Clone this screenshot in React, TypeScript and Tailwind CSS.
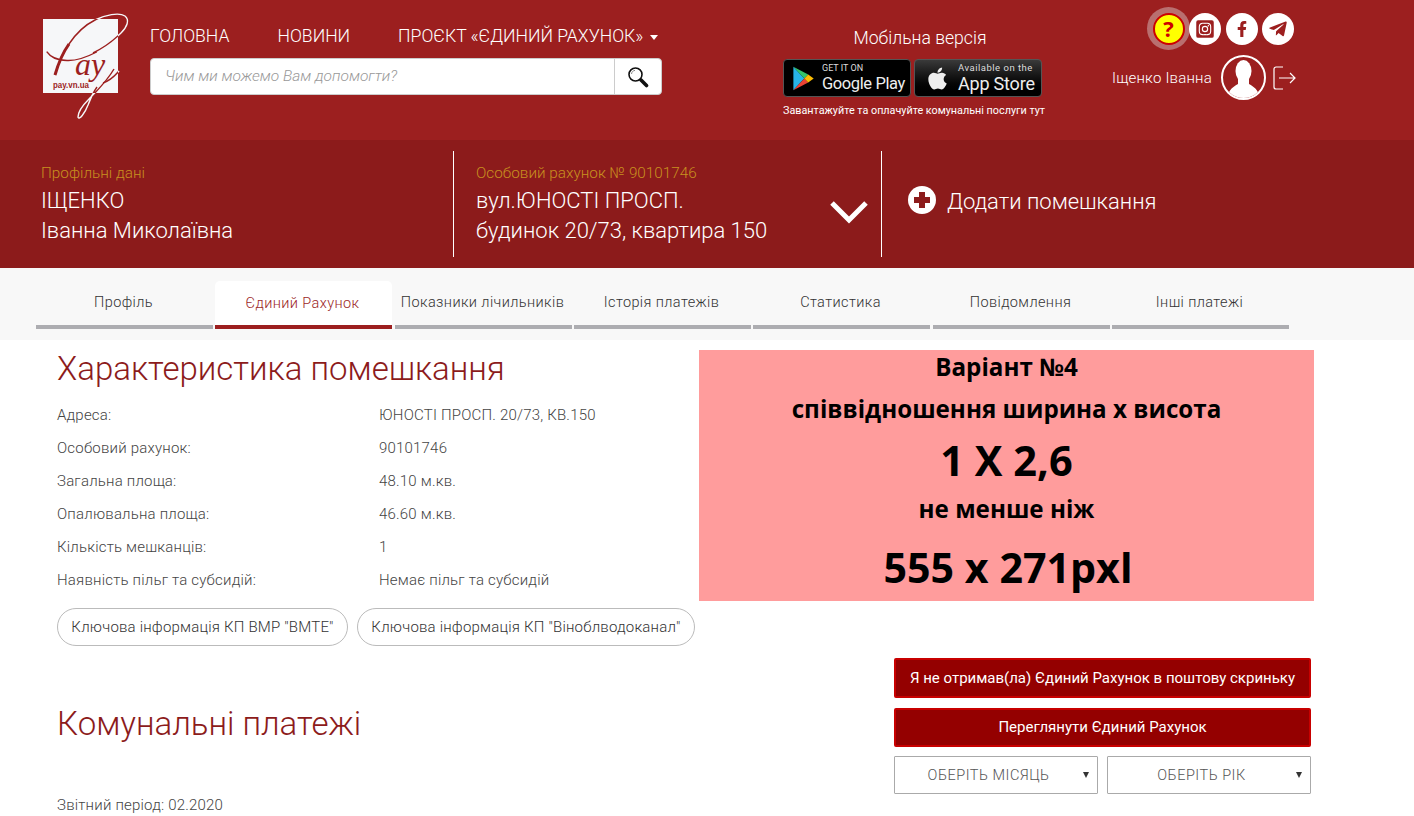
import { FaApple, FaFacebookF, FaInstagramSquare, FaTelegramPlane } from "react-icons/fa"

const tabs = [
  { label: "Профіль", mr: "mr-[2px]" },
  { label: "Єдиний Рахунок", mr: "mr-[3px]", active: true },
  { label: "Показники лічильників", mr: "mr-[2px]" },
  { label: "Історія платежів", mr: "mr-[2px]" },
  { label: "Статистика", mr: "mr-[3px]" },
  { label: "Повідомлення", mr: "mr-[2px]" },
  { label: "Інші платежі", mr: "" },
]

const rows = [
  ["Адреса:", "ЮНОСТІ ПРОСП. 20/73, КВ.150"],
  ["Особовий рахунок:", "90101746"],
  ["Загальна площа:", "48.10 м.кв."],
  ["Опалювальна площа:", "46.60 м.кв."],
  ["Кількість мешканців:", "1"],
  ["Наявність пільг та субсидій:", "Немає пільг та субсидій"],
]

const swash = [
  "M3.7 40.7 C8 47 14 49 24 49.5 C34 50 44 46 53.7 41",
  "M12 64 C16 50 21 40 26 33 C32 24 42 14 52 9 C62 4 76 1 82 5 C87 9 84 16 78 22 C70 30 60 37 50 42",
  "M71 58 C64 70 54 80 46 88 C40 94 35 101 35 106 C36 110 42 102 45 94 C47 88 50 82 54 76",
  "M60 72 C66 70 71 66 76 60",
]

function Logo() {
  return (
    <div className="relative w-[90px] h-[110px] shrink-0">
      <div className="absolute left-0 top-[8px] w-[75px] h-[74px] bg-[#f6f7f9]" />
      <svg className="absolute left-0 top-0" width="90" height="110" viewBox="0 0 90 110" fill="none">
        <defs>
          <clipPath id="logo-square">
            <rect x="0" y="8" width="75" height="74" />
          </clipPath>
        </defs>
        {swash.map((d) => (
          <path key={d} d={d} stroke="#f6f7f9" strokeWidth="1.4" />
        ))}
        <g clipPath="url(#logo-square)">
          {swash.map((d) => (
            <path key={d} d={d} stroke="#9c1f1f" strokeWidth="1.4" />
          ))}
          <path d="M12 64 C16 50 21 40 26 33" stroke="#9c1f1f" strokeWidth="3" />
        </g>
        <text x="32" y="64" fontFamily="'Liberation Serif', serif" fontStyle="italic" fontSize="32" fill="#9c1f1f">ay</text>
        <text x="10" y="77" fontFamily="'Liberation Sans', sans-serif" fontWeight="700" fontSize="9" fill="#9c1f1f" textLength="36" lengthAdjust="spacingAndGlyphs">pay.vn.ua</text>
      </svg>
    </div>
  )
}

function SearchGlyph() {
  return (
    <svg width="22" height="22" viewBox="0 0 22 22" fill="none">
      <circle cx="8.5" cy="8.5" r="6.5" stroke="#111" strokeWidth="1.6" />
      <path d="M4.5 8 C4.7 6 6 4.6 8 4.4" stroke="#888" strokeWidth="1" />
      <path d="M14 14 L19.5 19.5" stroke="#111" strokeWidth="3.6" strokeLinecap="round" />
    </svg>
  )
}

function PlayIcon() {
  return (
    <svg width="23" height="25" viewBox="0 0 28 32">
      <path d="M1 1 L15 16 L1 31 Z" fill="#27b4e8" />
      <path d="M1 1 L20 11 L15 16 Z" fill="#35c46b" />
      <path d="M1 31 L20 21 L15 16 Z" fill="#ea4335" />
      <path d="M20 11 L27 16 L20 21 L15 16 Z" fill="#fbbc04" />
    </svg>
  )
}

function Avatar() {
  return (
    <div className="w-[45px] h-[45px] rounded-full border-2 border-white overflow-hidden flex items-end justify-center">
      <svg width="41" height="41" viewBox="0 0 41 41">
        <ellipse cx="20.5" cy="14" rx="8" ry="11" fill="#fff" />
        <path d="M15 22 L15 27 C10 30 6 32 4 41 L37 41 C35 32 31 30 26 27 L26 22 Z" fill="#fff" />
      </svg>
    </div>
  )
}

function LogoutIcon() {
  return (
    <svg width="23" height="24" viewBox="0 0 23 24" fill="none" stroke="#fff" strokeWidth="1.2">
      <path d="M10 1 H3 A2 2 0 0 0 1 3 V21 A2 2 0 0 0 3 23 H10" />
      <path d="M6 12 H22 M17 7 L22 12 L17 17" />
    </svg>
  )
}

export default function App() {
  return (
    <div className="h-[816px] overflow-hidden bg-white font-['Roboto',sans-serif] font-light text-[#333]">
      {/* Top header */}
      <header className="h-[140px] bg-[#9c1f1f] flex pl-[43px] text-white">
        <div className="pt-[11px]">
          <Logo />
        </div>
        <div className="ml-[17px] w-[512px] pt-[24px]">
          <nav className="flex items-center h-[24px] text-[17.6px] leading-[24px] gap-[48px] whitespace-nowrap">
            <span>ГОЛОВНА</span>
            <span>НОВИНИ</span>
            <span className="flex items-center">
              ПРОЄКТ «ЄДИНИЙ РАХУНОК»
              <span className="ml-[7px] mt-[2px] border-x-[4.5px] border-x-transparent border-t-[5px] border-t-white" />
            </span>
          </nav>
          <div className="mt-[10px] h-[37px] flex bg-white rounded-[4px] border border-[#ccc] overflow-hidden">
            <div className="flex-1 pl-[14px] pt-[1px] flex items-center italic text-[15.5px] text-[#999]">
              Чим ми можемо Вам допомогти?
            </div>
            <div className="w-[47px] border-l border-[#ccc] flex items-center justify-center">
              <SearchGlyph />
            </div>
          </div>
        </div>
        <div className="ml-[121px] w-[262px] pt-[26px] flex flex-col">
          <div className="text-center text-[17.6px] leading-[24px] pl-[12px]">Мобільна версія</div>
          <div className="mt-[9px] flex gap-[3px]">
            <div className="w-[128px] h-[38px] bg-black rounded-[4px] border border-[#555] flex items-center pl-[8px] gap-[7px]">
              <PlayIcon />
              <div className="flex flex-col gap-[2px] font-['Roboto',sans-serif]">
                <span className="text-[9px] leading-[9px] font-normal text-[#ddd]">GET IT ON</span>
                <span className="text-[16.5px] leading-[18px] font-normal tracking-[-0.4px] text-[#eee]">Google Play</span>
              </div>
            </div>
            <div className="w-[128px] h-[38px] bg-gradient-to-b from-[#3a3a3a] via-[#111] to-[#000] rounded-[4px] border border-[#555] flex items-center pl-[10px] gap-[8px]">
              <FaApple className="text-[#eee] text-[25px]" />
              <div className="flex flex-col gap-[1px] font-['Roboto',sans-serif]">
                <span className="text-[9.5px] leading-[10px] font-normal tracking-[0.5px] text-[#ddd]">Available on the</span>
                <span className="text-[18px] leading-[20px] font-normal tracking-[-0.2px] text-[#eee]">App Store</span>
              </div>
            </div>
          </div>
          <div className="mt-[7px] text-[10.8px] leading-[14px] font-normal whitespace-nowrap">Завантажуйте та оплачуйте комунальні послуги тут</div>
        </div>
        <div className="ml-[67px] w-[190px] flex flex-col">
          <div className="mt-[7px] ml-[35px] flex items-center">
            <div className="w-[43px] h-[43px] rounded-full bg-[#b96f6f] flex items-center justify-center">
              <div className="w-[32px] h-[32px] rounded-full bg-[#ffff00] border-2 border-[#cc0000] flex items-center justify-center text-[#cc0000] text-[22px] font-bold font-['Open_Sans',sans-serif]">?</div>
            </div>
            <div className="-ml-[1px] w-[32px] h-[32px] rounded-full bg-white flex items-center justify-center text-[#9c1f1f] text-[20px]"><FaInstagramSquare /></div>
            <div className="ml-[5px] w-[32px] h-[32px] rounded-full bg-white flex items-center justify-center text-[#9c1f1f] text-[16px]"><FaFacebookF /></div>
            <div className="ml-[4px] w-[32px] h-[32px] rounded-full bg-white flex items-center justify-center text-[#9c1f1f] text-[20px]"><FaTelegramPlane /></div>
          </div>
          <div className="mt-[5px] flex items-center">
            <span className="text-[15px] w-[109px] whitespace-nowrap mt-[2px] tracking-[0.2px]">Іщенко Іванна</span>
            <Avatar />
            <span className="ml-[7px]"><LogoutIcon /></span>
          </div>
        </div>
      </header>

      {/* Profile band */}
      <section className="h-[128px] bg-[#8c1b1b] flex items-center text-white">
        <div className="w-[454px] h-[106px] border-r border-white pl-[41px] pt-[12px]">
          <div className="text-[15.3px] leading-[20px] text-[#c8901f]">Профільні дані</div>
          <div className="text-[22px] leading-[30px] mt-[3px]">ІЩЕНКО</div>
          <div className="text-[22px] leading-[30px]">Іванна Миколаївна</div>
        </div>
        <div className="w-[428px] h-[106px] border-r border-white pl-[22px] pt-[12px] flex">
          <div className="w-[354px]">
            <div className="text-[15.3px] leading-[20px] text-[#c8901f]">Особовий рахунок № 90101746</div>
            <div className="text-[22px] leading-[30px] mt-[3px]">вул.ЮНОСТІ ПРОСП.</div>
            <div className="text-[22px] leading-[30px] whitespace-nowrap">будинок 20/73, квартира 150</div>
          </div>
          <svg className="mt-[37px]" width="38" height="24" viewBox="0 0 38 24" fill="none">
            <path d="M2 3 L19 20 L36 3" stroke="#fff" strokeWidth="5" />
          </svg>
        </div>
        <div className="pl-[26px] flex items-center mb-[4px]">
          <div className="relative w-[28px] h-[28px] rounded-full bg-white -mt-[4px]">
            <div className="absolute left-[11px] top-[6px] w-[6px] h-[16px] bg-[#8c1b1b]" />
            <div className="absolute left-[6px] top-[11px] w-[16px] h-[6px] bg-[#8c1b1b]" />
          </div>
          <span className="ml-[11px] text-[22px] leading-[30px]">Додати помешкання</span>
        </div>
      </section>

      {/* Tabs */}
      <nav className="h-[72px] bg-[#f8f8f8] flex pl-[36px] pt-[13px]">
        {tabs.map((tab) => (
          <div
            key={tab.label}
            className={`w-[177px] ${tab.mr} h-[48px] flex items-center justify-center border-b-4 pr-[2px] text-[14.5px] tracking-[0.4px] whitespace-nowrap ${
              tab.active
                ? "bg-white rounded-t-[5px] border-[#9c1f1f] text-[#9c1f1f] pt-[2px]"
                : "border-[#adadb1] text-[#333]"
            }`}
          >
            {tab.label}
          </div>
        ))}
      </nav>

      {/* Characteristics and banner */}
      <div className="flex pl-[57px]">
        <div className="w-[642px]">
          <h2 className="mt-[11px] text-[33px] leading-[36px] font-light text-[#8c1b1b]">Характеристика помешкання</h2>
          <div className="mt-[12px]">
            {rows.map(([label, value]) => (
              <div key={label} className="flex h-[33px] items-center text-[15px] tracking-[0.2px] text-[#444]">
                <span className="w-[322px]">{label}</span>
                <span>{value}</span>
              </div>
            ))}
          </div>
          <div className="mt-[11px] flex gap-[9px] whitespace-nowrap">
            <div className="h-[38px] w-[291px] rounded-full border border-[#bbb] flex items-center justify-center text-[15px] tracking-[0.2px] text-[#333]">Ключова інформація КП ВМР "ВМТЕ"</div>
            <div className="h-[38px] w-[338px] rounded-full border border-[#bbb] flex items-center justify-center text-[15px] tracking-[0.2px] text-[#333]">Ключова інформація КП "Віноблводоканал"</div>
          </div>
        </div>
        <div className="mt-[10px] w-[615px] h-[251px] bg-[#ff9c9c] font-['Open_Sans',sans-serif] font-bold text-black text-center flex flex-col items-center">
          <div className="text-[24.2px] leading-[34px]">Варіант №4</div>
          <div className="text-[24.2px] leading-[34px] mt-[8px]">співвідношення ширина х висота</div>
          <div className="text-[41.5px] leading-[54px] mt-[7px]">1 Х 2,6</div>
          <div className="text-[24.2px] leading-[34px] mt-[5px]">не менше ніж</div>
          <div className="text-[41.2px] leading-[54px] mt-[14px] ml-[3px]">555 x 271pxl</div>
        </div>
      </div>

      {/* Payments header */}
      <div className="flex pl-[57px]">
        <div className="w-[837px]">
          <h2 className="mt-[60px] text-[33px] leading-[36px] font-light text-[#8c1b1b]">Комунальні платежі</h2>
          <div className="mt-[53px] text-[15px] tracking-[0.2px] leading-[20px] text-[#444]">Звітний період: 02.2020</div>
        </div>
        <div className="w-[417px] pt-[12px]">
          <div className="h-[40px] bg-[#940000] border-2 border-[#c80000] rounded-[2px] flex items-center justify-center text-white text-[15px] font-normal whitespace-nowrap">Я не отримав(ла) Єдиний Рахунок в поштову скриньку</div>
          <div className="mt-[10px] h-[39px] bg-[#940000] border-2 border-[#c80000] rounded-[2px] flex items-center justify-center text-white text-[15px] font-normal">Переглянути Єдиний Рахунок</div>
          <div className="mt-[9px] flex gap-[9px]">
            <div className="relative w-[204px] h-[38px] border border-[#aaa] rounded-[1px] flex items-center justify-center pr-[15px] pt-[2px] text-[14.5px] text-[#555] tracking-[0.5px]">
              ОБЕРІТЬ МІСЯЦЬ
              <span className="absolute right-[8px] top-[15px] border-x-[3.5px] border-x-transparent border-t-[6px] border-t-[#333]" />
            </div>
            <div className="relative w-[204px] h-[38px] border border-[#aaa] rounded-[1px] flex items-center justify-center pr-[15px] pt-[2px] text-[14.5px] text-[#555] tracking-[0.5px]">
              ОБЕРІТЬ РІК
              <span className="absolute right-[8px] top-[15px] border-x-[3.5px] border-x-transparent border-t-[6px] border-t-[#333]" />
            </div>
          </div>
        </div>
      </div>
    </div>
  )
}
